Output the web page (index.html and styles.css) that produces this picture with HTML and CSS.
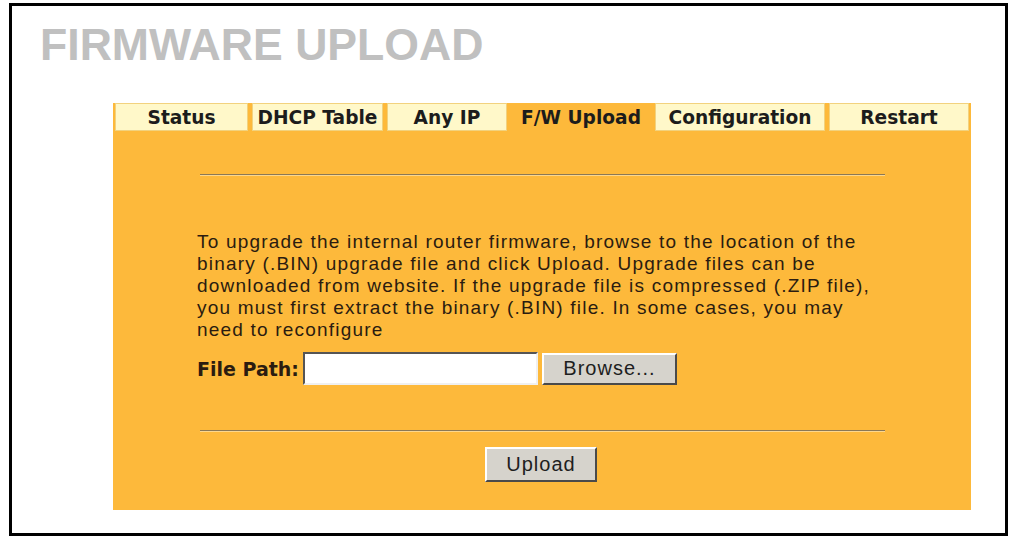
FILE: index.html
```html
<!DOCTYPE html>
<html>
<head>
<meta charset="utf-8">
<title>Firmware Upload</title>
<link rel="stylesheet" href="styles.css">
</head>
<body>
<div class="frame">
  <h1 class="title">FIRMWARE UPLOAD</h1>
  <div class="panel">
    <div class="tabs">
      <div class="tab">Status</div>
      <div class="tab">DHCP Table</div>
      <div class="tab">Any IP</div>
      <div class="tab active">F/W Upload</div>
      <div class="tab">Configuration</div>
      <div class="tab">Restart</div>
    </div>
    <div class="content">
      <div class="rule"></div>
      <p class="desc">To upgrade the internal router firmware, browse to the location of the binary (.BIN) upgrade file and click Upload. Upgrade files can be downloaded from website. If the upgrade file is compressed (.ZIP file), you must first extract the binary (.BIN) file. In some cases, you may need to reconfigure</p>
      <div class="file-row">
        <span class="label">File Path:</span>
        <span class="input"></span>
        <span class="btn browse">Browse...</span>
      </div>
      <div class="rule rule-bottom"></div>
      <div class="actions">
        <span class="btn upload">Upload</span>
      </div>
    </div>
  </div>
</div>
</body>
</html>
```

FILE: styles.css
```css
html, body {
  margin: 0;
  padding: 0;
  background: #ffffff;
}

.frame {
  margin: 3px 0 0 9px;
  width: 993px;
  height: 527px;
  border: 3px solid #000000;
  background: #ffffff;
}

.title {
  margin: 0;
  padding: 16px 0 0 28px;
  font-family: "Liberation Sans", Arial, sans-serif;
  font-weight: bold;
  font-size: 44.6px;
  line-height: 45px;
  color: #c0c0c0;
}

.panel {
  margin: 36px 0 0 101px;
  width: 858px;
  height: 407px;
  box-sizing: border-box;
  padding: 0 2px;
  background: #fdb93b;
}

.tabs {
  display: grid;
  grid-template-columns: 133px 131px 120px 140px 170px 140px;
  column-gap: 4px;
  height: 28px;
}

.tab {
  display: flex;
  align-items: center;
  justify-content: center;
  box-sizing: border-box;
  background: #fff8c9;
  border: 1px solid #f2d27e;
  font-family: "DejaVu Sans", sans-serif;
  font-weight: bold;
  font-size: 18.6px;
  color: #1c1c1c;
}

.tab.active {
  background: #fdb93b;
  border-color: #fdb93b;
}

.content {
  margin-left: 82px;
  width: 688px;
}

.rule {
  margin: 43px 0 0 3px;
  height: 0;
  border-top: 1px solid #8a7856;
  border-bottom: 1px solid #fcd78e;
}

.desc {
  margin: 55px 0 0 0;
  font-family: "Liberation Sans", Arial, sans-serif;
  font-size: 19px;
  line-height: 22px;
  letter-spacing: 1.2px;
  color: #2b1c10;
}

.file-row {
  display: flex;
  align-items: center;
  margin-top: 11px;
  height: 33px;
}

.label {
  font-family: "DejaVu Sans", sans-serif;
  font-weight: bold;
  font-size: 19px;
  color: #2b1c10;
  width: 106px;
  white-space: nowrap;
}

.input {
  box-sizing: border-box;
  width: 235px;
  height: 33px;
  background: #ffffff;
  border-style: solid;
  border-width: 2px;
  border-color: #555555 #f0f0f0 #f0f0f0 #555555;
}

.btn {
  display: inline-flex;
  align-items: center;
  justify-content: center;
  box-sizing: border-box;
  background: #d6d3cc;
  border-style: solid;
  border-width: 2px;
  border-color: #ffffff #4a4a4a #4a4a4a #ffffff;
  font-family: "Liberation Sans", Arial, sans-serif;
  font-size: 20px;
  letter-spacing: 1px;
  color: #1e1e1e;
}

.browse {
  margin-left: 4px;
  width: 135px;
  height: 32px;
}

.rule-bottom {
  margin-top: 45px;
}

.actions {
  display: flex;
  justify-content: center;
  margin-top: 15px;
}

.upload {
  width: 112px;
  height: 35px;
}
```
